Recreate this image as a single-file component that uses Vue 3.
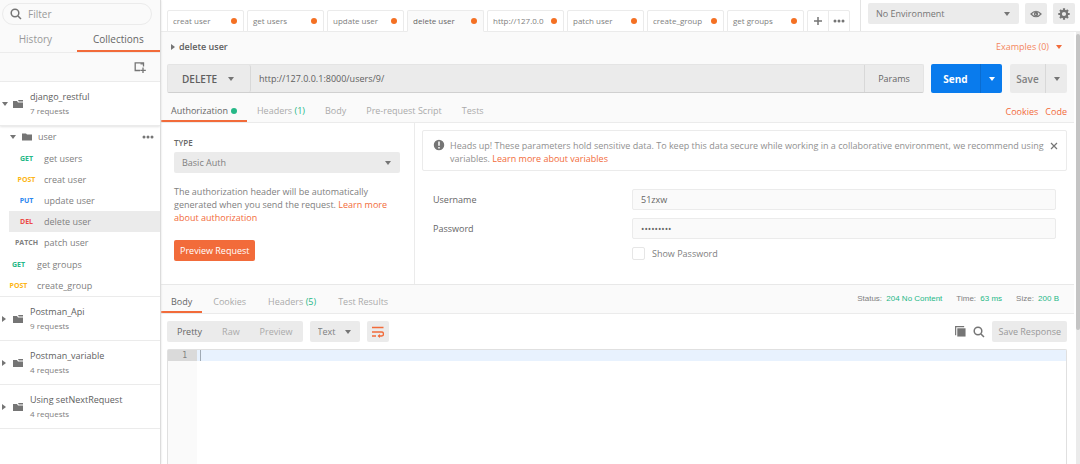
<script setup>
import { ref } from 'vue'

const filter = ref('')
const url = ref('http://127.0.0.1:8000/users/9/')
const username = ref('51zxw')
const password = ref('secret123')
const showPassword = ref(false)

const folderRequests = [
  { method: 'GET', name: 'get users' },
  { method: 'POST', name: 'creat user' },
  { method: 'PUT', name: 'update user' },
  { method: 'DEL', name: 'delete user', active: true },
  { method: 'PATCH', name: 'patch user' },
]
const rootRequests = [
  { method: 'GET', name: 'get groups' },
  { method: 'POST', name: 'create_group' },
]
const collections = [
  { name: 'Postman_Api', count: '9 requests' },
  { name: 'Postman_variable', count: '4 requests' },
  { name: 'Using setNextRequest', count: '4 requests' },
]
const tabs = ['creat user', 'get users', 'update user', 'delete user', 'http://127.0.0', 'patch user', 'create_group', 'get groups']
</script>

<template>
  <div class="app">
    <aside class="sidebar">
      <div class="side-head">
        <label class="filter">
          <svg class="i-search" viewBox="0 0 12 12"><circle cx="5" cy="5" r="3.8" /><path d="M8 8l3 3" /></svg>
          <input v-model="filter" type="text" placeholder="Filter" aria-label="Filter" />
        </label>
        <nav class="side-tabs">
          <button type="button">History</button>
          <button type="button" class="on">Collections</button>
        </nav>
      </div>
      <div class="side-tools">
        <button type="button" aria-label="New collection">
          <svg class="i-new" viewBox="0 0 12 12"><path d="M6 9.500H1.200V1.800H9.500V5.500M9 6.500v5.500M6.300 9.300h5.500" /><path d="M6.500 2.800h3" /></svg>
        </button>
      </div>

      <div class="collection open">
        <svg class="i-caret" viewBox="0 0 6 4"><path d="M0 0h6L3 4z" /></svg>
        <svg class="i-folder" viewBox="0 0 10 8"><path d="M0 1h4l1 1.500h5V8H0zM5 0h5v1.500H5.800z" /></svg>
        <div>
          <div class="c-name">django_restful</div>
          <div class="c-count">7 requests</div>
        </div>
      </div>
      <div class="tree">
        <div class="folder">
          <svg class="i-caret" viewBox="0 0 6 4"><path d="M0 0h6L3 4z" /></svg>
          <svg class="i-folder" viewBox="0 0 10 8"><path d="M0 .5h4l1 1h5V7.500H0z" /></svg>
          <span>user</span>
          <button type="button" class="more" aria-label="More"><svg class="i-dots" viewBox="0 0 12 4"><circle cx="2" cy="2" r="1.500" /><circle cx="6" cy="2" r="1.500" /><circle cx="10" cy="2" r="1.500" /></svg></button>
        </div>
        <ul class="nested">
          <li v-for="r in folderRequests" :key="r.name" :class="{ active: r.active }">
            <b :class="r.method.toLowerCase()">{{ r.method }}</b><span>{{ r.name }}</span>
          </li>
        </ul>
        <ul class="root">
          <li v-for="r in rootRequests" :key="r.name">
            <b :class="r.method.toLowerCase()">{{ r.method }}</b><span>{{ r.name }}</span>
          </li>
        </ul>
      </div>
      <div v-for="c in collections" :key="c.name" class="collection">
        <svg class="i-caret right" viewBox="0 0 4 6"><path d="M0 0v6l4-3z" /></svg>
        <svg class="i-folder" viewBox="0 0 10 8"><path d="M0 1h4l1 1.500h5V8H0zM5 0h5v1.500H5.800z" /></svg>
        <div>
          <div class="c-name">{{ c.name }}</div>
          <div class="c-count">{{ c.count }}</div>
        </div>
      </div>
    </aside>

    <main class="main">
      <header class="topbar">
        <div class="tabs">
          <button v-for="t in tabs" :key="t" type="button" class="tab" :class="{ on: t === 'delete user' }">
            <span>{{ t }}</span><i></i>
          </button>
          <div class="tab-tools">
            <button type="button" aria-label="New tab"><svg class="i-plus" viewBox="0 0 10 10"><path d="M5 1v8M1 5h8" /></svg></button>
            <button type="button" aria-label="Tab options"><svg class="i-dots" viewBox="0 0 12 4"><circle cx="2" cy="2" r="1.500" /><circle cx="6" cy="2" r="1.500" /><circle cx="10" cy="2" r="1.500" /></svg></button>
          </div>
        </div>
        <div class="env">
          <div class="select env-select">
            <select aria-label="Environment"><option>No Environment</option></select>
            <svg class="i-caret" viewBox="0 0 6 4"><path d="M0 0h6L3 4z" /></svg>
          </div>
          <button type="button" class="square" aria-label="Environment quick look">
            <svg class="i-eye" viewBox="0 0 12 8"><path d="M1 4Q6-1.500 11 4Q6 9.500 1 4z" /><circle cx="6" cy="4" r="1.600" /><circle cx="6.500" cy="3.500" r=".6" class="dot" /></svg>
          </button>
          <button type="button" class="square" aria-label="Settings">
            <svg class="i-gear" viewBox="0 0 12 12"><circle cx="6" cy="6" r="3.200" /><path d="M6 .3v2M6 9.700v2M.3 6h2M9.700 6h2M2 2l1.400 1.400M8.600 8.600L10 10M2 10l1.400-1.400M8.600 3.400L10 2" /></svg>
          </button>
        </div>
      </header>

      <div class="body">
        <div class="content">
          <section class="request">
            <div class="title-row">
              <svg class="i-caret right" viewBox="0 0 4 6"><path d="M0 0v6l4-3z" /></svg>
              <h1>delete user</h1>
              <button type="button" class="examples">Examples (0) <svg class="i-caret" viewBox="0 0 6 4"><path d="M0 0h6L3 4z" /></svg></button>
            </div>
            <div class="url-row">
              <div class="url-group">
                <div class="select method">
                  <select aria-label="Method"><option>DELETE</option></select>
                  <svg class="i-caret" viewBox="0 0 6 4"><path d="M0 0h6L3 4z" /></svg>
                </div>
                <input v-model="url" class="url" type="text" aria-label="Request URL" />
                <button type="button" class="params">Params</button>
              </div>
              <div class="split send">
                <button type="button">Send</button>
                <button type="button" aria-label="Send options"><svg class="i-caret" viewBox="0 0 6 4"><path d="M0 0h6L3 4z" /></svg></button>
              </div>
              <div class="split save">
                <button type="button">Save</button>
                <button type="button" aria-label="Save options"><svg class="i-caret" viewBox="0 0 6 4"><path d="M0 0h6L3 4z" /></svg></button>
              </div>
            </div>
            <nav class="subtabs request-tabs">
              <button type="button" class="on">Authorization<i></i></button>
              <button type="button">Headers <em>(1)</em></button>
              <button type="button">Body</button>
              <button type="button">Pre-request Script</button>
              <button type="button">Tests</button>
              <span class="links"><a href="#">Cookies</a><a href="#">Code</a></span>
            </nav>
          </section>

          <section class="auth">
            <div class="auth-type">
              <label for="auth-type">TYPE</label>
              <div class="select">
                <select id="auth-type"><option>Basic Auth</option></select>
                <svg class="i-caret" viewBox="0 0 6 4"><path d="M0 0h6L3 4z" /></svg>
              </div>
              <p>The authorization header will be automatically generated when you send the request. <a href="#">Learn more about authorization</a></p>
              <button type="button" class="preview">Preview Request</button>
            </div>
            <div class="auth-form">
              <div class="notice">
                <svg class="i-info" viewBox="0 0 12 12"><circle cx="6" cy="6" r="6" /><path d="M6 2.500v4.200M6 8v1.500" /></svg>
                <p>Heads up! These parameters hold sensitive data. To keep this data secure while working in a collaborative environment, we recommend using variables. <a href="#">Learn more about variables</a></p>
                <button type="button" aria-label="Dismiss"><svg class="i-close" viewBox="0 0 8 8"><path d="M1 1l6 6M7 1L1 7" /></svg></button>
              </div>
              <div class="fields">
                <label for="user">Username</label>
                <input id="user" v-model="username" type="text" />
                <label for="pass">Password</label>
                <input id="pass" v-model="password" :type="showPassword ? 'text' : 'password'" />
                <label class="check"><input v-model="showPassword" type="checkbox" />Show Password</label>
              </div>
            </div>
          </section>

          <nav class="subtabs response-tabs">
            <button type="button" class="on">Body</button>
            <button type="button">Cookies</button>
            <button type="button">Headers <em>(5)</em></button>
            <button type="button">Test Results</button>
            <div class="status">
              <span>Status: <em>204 No Content</em></span>
              <span>Time: <em>63 ms</em></span>
              <span>Size: <em>200 B</em></span>
            </div>
          </nav>

          <section class="response">
            <div class="tools">
              <div class="modes">
                <button type="button" class="on">Pretty</button>
                <button type="button">Raw</button>
                <button type="button">Preview</button>
              </div>
              <div class="select format">
                <select aria-label="Format"><option>Text</option></select>
                <svg class="i-caret" viewBox="0 0 6 4"><path d="M0 0h6L3 4z" /></svg>
              </div>
              <button type="button" class="square" aria-label="Wrap lines">
                <svg class="i-wrap" viewBox="0 0 12 12"><path d="M0 1.500h11.500M0 6h9.500a2 2 0 0 1 0 4H6.500M0 10h4" /><path class="head" d="M8 8v4L5.500 10z" /></svg>
              </button>
              <div class="right-tools">
                <button type="button" aria-label="Copy"><svg class="i-copy" viewBox="0 0 12 12"><path d="M.7 10V.7H10" /><rect x="2.500" y="2.500" width="9" height="9" /></svg></button>
                <button type="button" aria-label="Search"><svg class="i-search" viewBox="0 0 12 12"><circle cx="5" cy="5" r="3.800" /><path d="M8 8l3 3" /></svg></button>
                <button type="button" class="save-response">Save Response</button>
              </div>
            </div>
            <div class="editor">
              <div class="gutter"><span>1</span></div>
              <div class="code"><div class="line"><i></i></div></div>
            </div>
          </section>
        </div>
        <div class="scroll"><div class="thumb"></div></div>
      </div>
    </main>
  </div>
</template>

<style>
body { margin: 0; background: #fff; }
</style>

<style scoped>
* { box-sizing: border-box; }
.app { display: flex; min-height: 100vh; font: 9px/12px "Open Sans", sans-serif; color: #808080; background: #fff; }
button, input, select { font: inherit; color: inherit; border: 0; margin: 0; padding: 0; background: none; border-radius: 0; outline: 0; }
select { appearance: none; width: 100%; height: 100%; }
button { cursor: pointer; white-space: nowrap; }
ul { list-style: none; margin: 0; padding: 0; }
p, h1 { margin: 0; }
a { color: #f26b3a; text-decoration: none; }
em { font-style: normal; color: #26b887; }
svg { display: block; flex: none; fill: none; stroke: #757575; }
.i-caret { width: 6px; height: 4px; fill: #757575; stroke: none; }
.i-caret.right { width: 4px; height: 6px; }
.i-folder { width: 10px; height: 8px; fill: #757575; stroke: none; }
.i-dots { width: 12px; height: 4px; fill: #757575; stroke: none; }
.i-search { width: 12px; height: 12px; stroke-width: 1.5; }
.i-new { width: 12px; height: 12px; stroke-width: 1.3; }
.i-plus { width: 10px; height: 10px; stroke-width: 1.5; }
.i-eye { width: 12px; height: 8px; stroke-width: 1.2; }
.i-eye .dot { fill: #808080; }
.i-gear { width: 12px; height: 12px; stroke-width: 2.2; }
.i-info { width: 12px; height: 12px; fill: #757575; stroke: #fff; stroke-width: 1.5; }
.i-close { width: 8px; height: 8px; stroke-width: 1.2; }
.i-wrap { width: 12px; height: 12px; stroke: #f26b3a; stroke-width: 1.4; }
.i-wrap .head { fill: #f26b3a; stroke: none; }
.i-copy { width: 11px; height: 11px; stroke-width: 1.3; }
.i-copy rect { fill: #757575; stroke: none; }

.sidebar { flex: none; width: 161px; border-right: 1px solid #dcdcdc; box-shadow: 0 0 2px #ddd; z-index: 1; background: #fff; }
.side-head { background: #fafafa; border-bottom: 1px solid #ececec; padding-top: 3px; }
.filter { display: flex; align-items: center; gap: 6px; height: 22px; margin: 0 8px 0 2px; padding-left: 7px; border: 1px solid #ebebeb; border-radius: 11px; font-size: 10px; }
.filter input { flex: 1; min-width: 0; }
.filter input::placeholder { color: #999; opacity: 1; }
.side-tabs { display: flex; height: 27px; font-size: 10px; color: #999; }
.side-tabs button { flex: 1; padding-top: 3px; border-bottom: 2px solid transparent; }
.side-tabs button:first-child { flex: 0 0 48%; padding-right: 6px; }
.side-tabs .on { color: #666; border-color: #f26b3a; }
.side-tools { display: flex; justify-content: flex-end; align-items: center; height: 29px; padding-right: 14px; background: #fafafa; border-bottom: 1px solid #ececec; }

.collection { display: flex; align-items: center; height: 44px; padding-left: 2px; border-bottom: 1px solid #ebebeb; }
.collection .i-caret { margin-right: 5px; }
.collection .i-caret.right { margin-right: 7px; }
.collection .i-folder { margin-right: 7px; }
.collection.open { box-shadow: 0 1px 2px #e4e4e4; }
.c-name { font-size: 9px; line-height: 14px; color: #606060; }
.c-count { line-height: 14px; font-size: 8px; }
.tree { border-bottom: 1px solid #ebebeb; }
.folder { display: flex; align-items: center; height: 22px; padding: 0 6px 0 10px; }
.folder .i-folder { margin: 0 6px; }
.folder span { flex: 1; }
.nested li, .root li { display: flex; align-items: center; height: 21px; }
.nested { padding: 0 0 1px 9px; }
li b { flex: none; width: 35px; text-align: center; font-size: 7px; }
.root b { width: 37px; }
.active { background: #ebebeb; }
.get { color: #26b887; }
.post { color: #fdb515; }
.put { color: #2b87f0; }
.del { color: #ed4b48; }
.patch { color: #808080; }

.main { flex: 1; min-width: 0; display: flex; flex-direction: column; }
.topbar { display: flex; justify-content: space-between; height: 32px; border-bottom: 1px solid #ebebeb; }
.tabs { display: flex; gap: 3px; padding: 10px 0 0 6px; margin-bottom: -1px; min-width: 0; }
.tab { display: flex; justify-content: space-between; align-items: center; width: 77px; padding: 0 6px 0 5px; border: 1px solid #ebebeb; border-radius: 2px 2px 0 0; background: #fff; font-size: 8px; }
.tab.on { background: #fafafa; border-bottom-color: #fafafa; color: #666; }
.tab i { flex: none; width: 6px; height: 6px; border-radius: 50%; background: #f47023; }
.tab-tools { display: flex; border: 1px solid #ebebeb; border-radius: 2px 2px 0 0; }
.tab-tools button { display: grid; place-items: center; width: 20px; }
.tab-tools button + button { width: 21px; border-left: 1px solid #ebebeb; }
.env { display: flex; gap: 6px; padding: 3px 5px 0 7px; border-left: 1px solid #e4e4e4; }
.select { display: grid; align-items: center; height: 21px; background: #ebebeb; border-radius: 2px; }
.select > * { grid-area: 1 / 1; }
.select select { padding-left: 8px; }
.select .i-caret { justify-self: end; margin-right: 9px; pointer-events: none; }
.env-select { width: 151px; color: #757575; }
.square { display: grid; place-items: center; width: 22px; height: 21px; background: #ebebeb; border-radius: 2px; }

.body { flex: 1; display: flex; gap: 2px; }
.content { flex: 1; min-width: 0; display: flex; flex-direction: column; }
.scroll { flex: none; width: 4px; padding-top: 2px; background: #ebebeb; }
.thumb { height: 296px; background: #c4c4c4; border-radius: 2px; }
.request { background: #fafafa; }
.title-row { display: flex; align-items: center; gap: 4px; height: 32px; padding: 0 12px 2px 10px; }
h1 { flex: 1; font-size: 9px; font-weight: 600; color: #606060; }
.examples { display: flex; align-items: center; gap: 7px; color: #f4865e; }
.examples .i-caret { fill: #f26b3a; }
.url-row { display: flex; padding: 0 7px 0 6px; height: 29px; }
.url-group { flex: 1; display: flex; margin-right: 7px; background: #ebebeb; border: 1px solid #e4e4e4; border-bottom-color: #d0d0d0; border-radius: 2px; }
.url-group .method { width: 83px; height: 100%; font-size: 10px; font-weight: 600; color: #606060; border-right: 1px solid #d8d8d8; }
.method select { padding-left: 14px; }
.select.method .i-caret { margin-right: 16px; }
.url { flex: 1; min-width: 0; padding-left: 8px; color: #606060; }
.params { width: 59px; border-left: 1px solid #d8d8d8; color: #666; }
.split { display: flex; border-radius: 2px; }
.split button { display: grid; place-items: center; font-size: 10px; font-weight: 600; }
.send { width: 71px; margin-right: 8px; background: #097bed; color: #fff; }
.send button { flex: 1; }
.send button:first-child { font-weight: 700; }
.split button + button { flex: 0 0 22px; border-left: 1px solid #0a6cd0; }
.send .i-caret { fill: #fff; }
.save { width: 57px; background: #ebebeb; }
.save button { flex: 1; }
.save button + button { border-left-color: #d8d8d8; }

.subtabs { display: flex; height: 30px; padding-right: 7px; border-bottom: 1px solid #ebebeb; color: #aaa; background: #fafafa; }
.subtabs button { padding: 7px 11px 0; border-bottom: 2px solid transparent; }
.subtabs.request-tabs button { padding: 8px 10px 0; }
.subtabs button.on { color: #666; border-color: #f26b3a; padding-left: 10px; padding-right: 10px; }
.subtabs i { display: inline-block; width: 6px; height: 6px; margin-left: 3px; border-radius: 50%; background: #26b887; }
.links { display: flex; gap: 7px; margin-left: auto; padding-top: 13px; }

.auth { display: flex; border-bottom: 1px solid #e8e8e8; }
.auth-type { flex: none; width: 254px; padding: 14px 14px 23px 13px; border-right: 1px solid #ebebeb; }
.auth-type > label { display: block; margin-bottom: 3px; font-size: 8px; font-weight: 600; color: #666; }
.auth-type p { margin: 12px 0 16px; line-height: 13px; }
.preview { height: 21px; padding: 0 6px; color: #fff; background: #f26b3a; border-radius: 2px; }
.auth-form { flex: 1; min-width: 0; padding: 7px 7px 0; }
.notice { display: flex; align-items: flex-start; height: 41px; padding: 8px 8px 0 10px; border: 1px solid #ebebeb; border-radius: 2px; }
.notice p { flex: 1; margin: 0 4px 0 5px; line-height: 13px; color: #909090; }
.notice button { padding-top: 3px; }
.fields { display: grid; grid-template-columns: 199px 1fr; gap: 8px 0; align-items: center; padding: 18px 11px 0; color: #666; }
.fields > input { height: 21px; padding: 0 8px; background: #fafafa; border: 1px solid #ebebeb; border-radius: 2px; }
.check { grid-column: 2; display: flex; align-items: center; gap: 7px; color: #808080; }
.check input { appearance: none; width: 13px; height: 13px; border: 1px solid #e6e6e6; border-radius: 2px; }

.response-tabs { height: 29px; }
.status { display: flex; gap: 14px; margin-left: auto; padding: 8px 8px 0 0; font-family: "Liberation Sans", Arial, sans-serif; font-size: 8px; color: #808080; }
.status em { margin-left: 2px; }
.response { flex: 1; display: flex; flex-direction: column; padding: 7px 7px 0 6px; }
.tools { display: flex; gap: 7px; margin-bottom: 7px; }
.modes { display: flex; height: 21px; background: #ebebeb; border-radius: 2px; color: #aaa; }
.modes button { padding: 0 10px; }
.modes .on { color: #666; }
.format { width: 50px; }
.right-tools { display: flex; align-items: center; gap: 7px; margin-left: auto; }
.save-response { height: 21px; padding: 0 6px; background: #ebebeb; border-radius: 2px; color: #999; }
.editor { flex: 1; display: flex; border: 1px solid #e0e0e0; border-bottom: 0; border-radius: 2px 2px 0 0; }
.gutter { width: 29px; background: #fafafa; font-family: "DejaVu Sans Mono", monospace; font-size: 8px; line-height: 11px; }
.gutter span { display: block; padding-right: 10px; text-align: right; background: #dadada; }
.code { flex: 1; }
.line { height: 11px; padding-left: 3px; background: #e8f2fe; }
.line i { display: block; width: 1px; height: 11px; background: #a0aab4; }
</style>
